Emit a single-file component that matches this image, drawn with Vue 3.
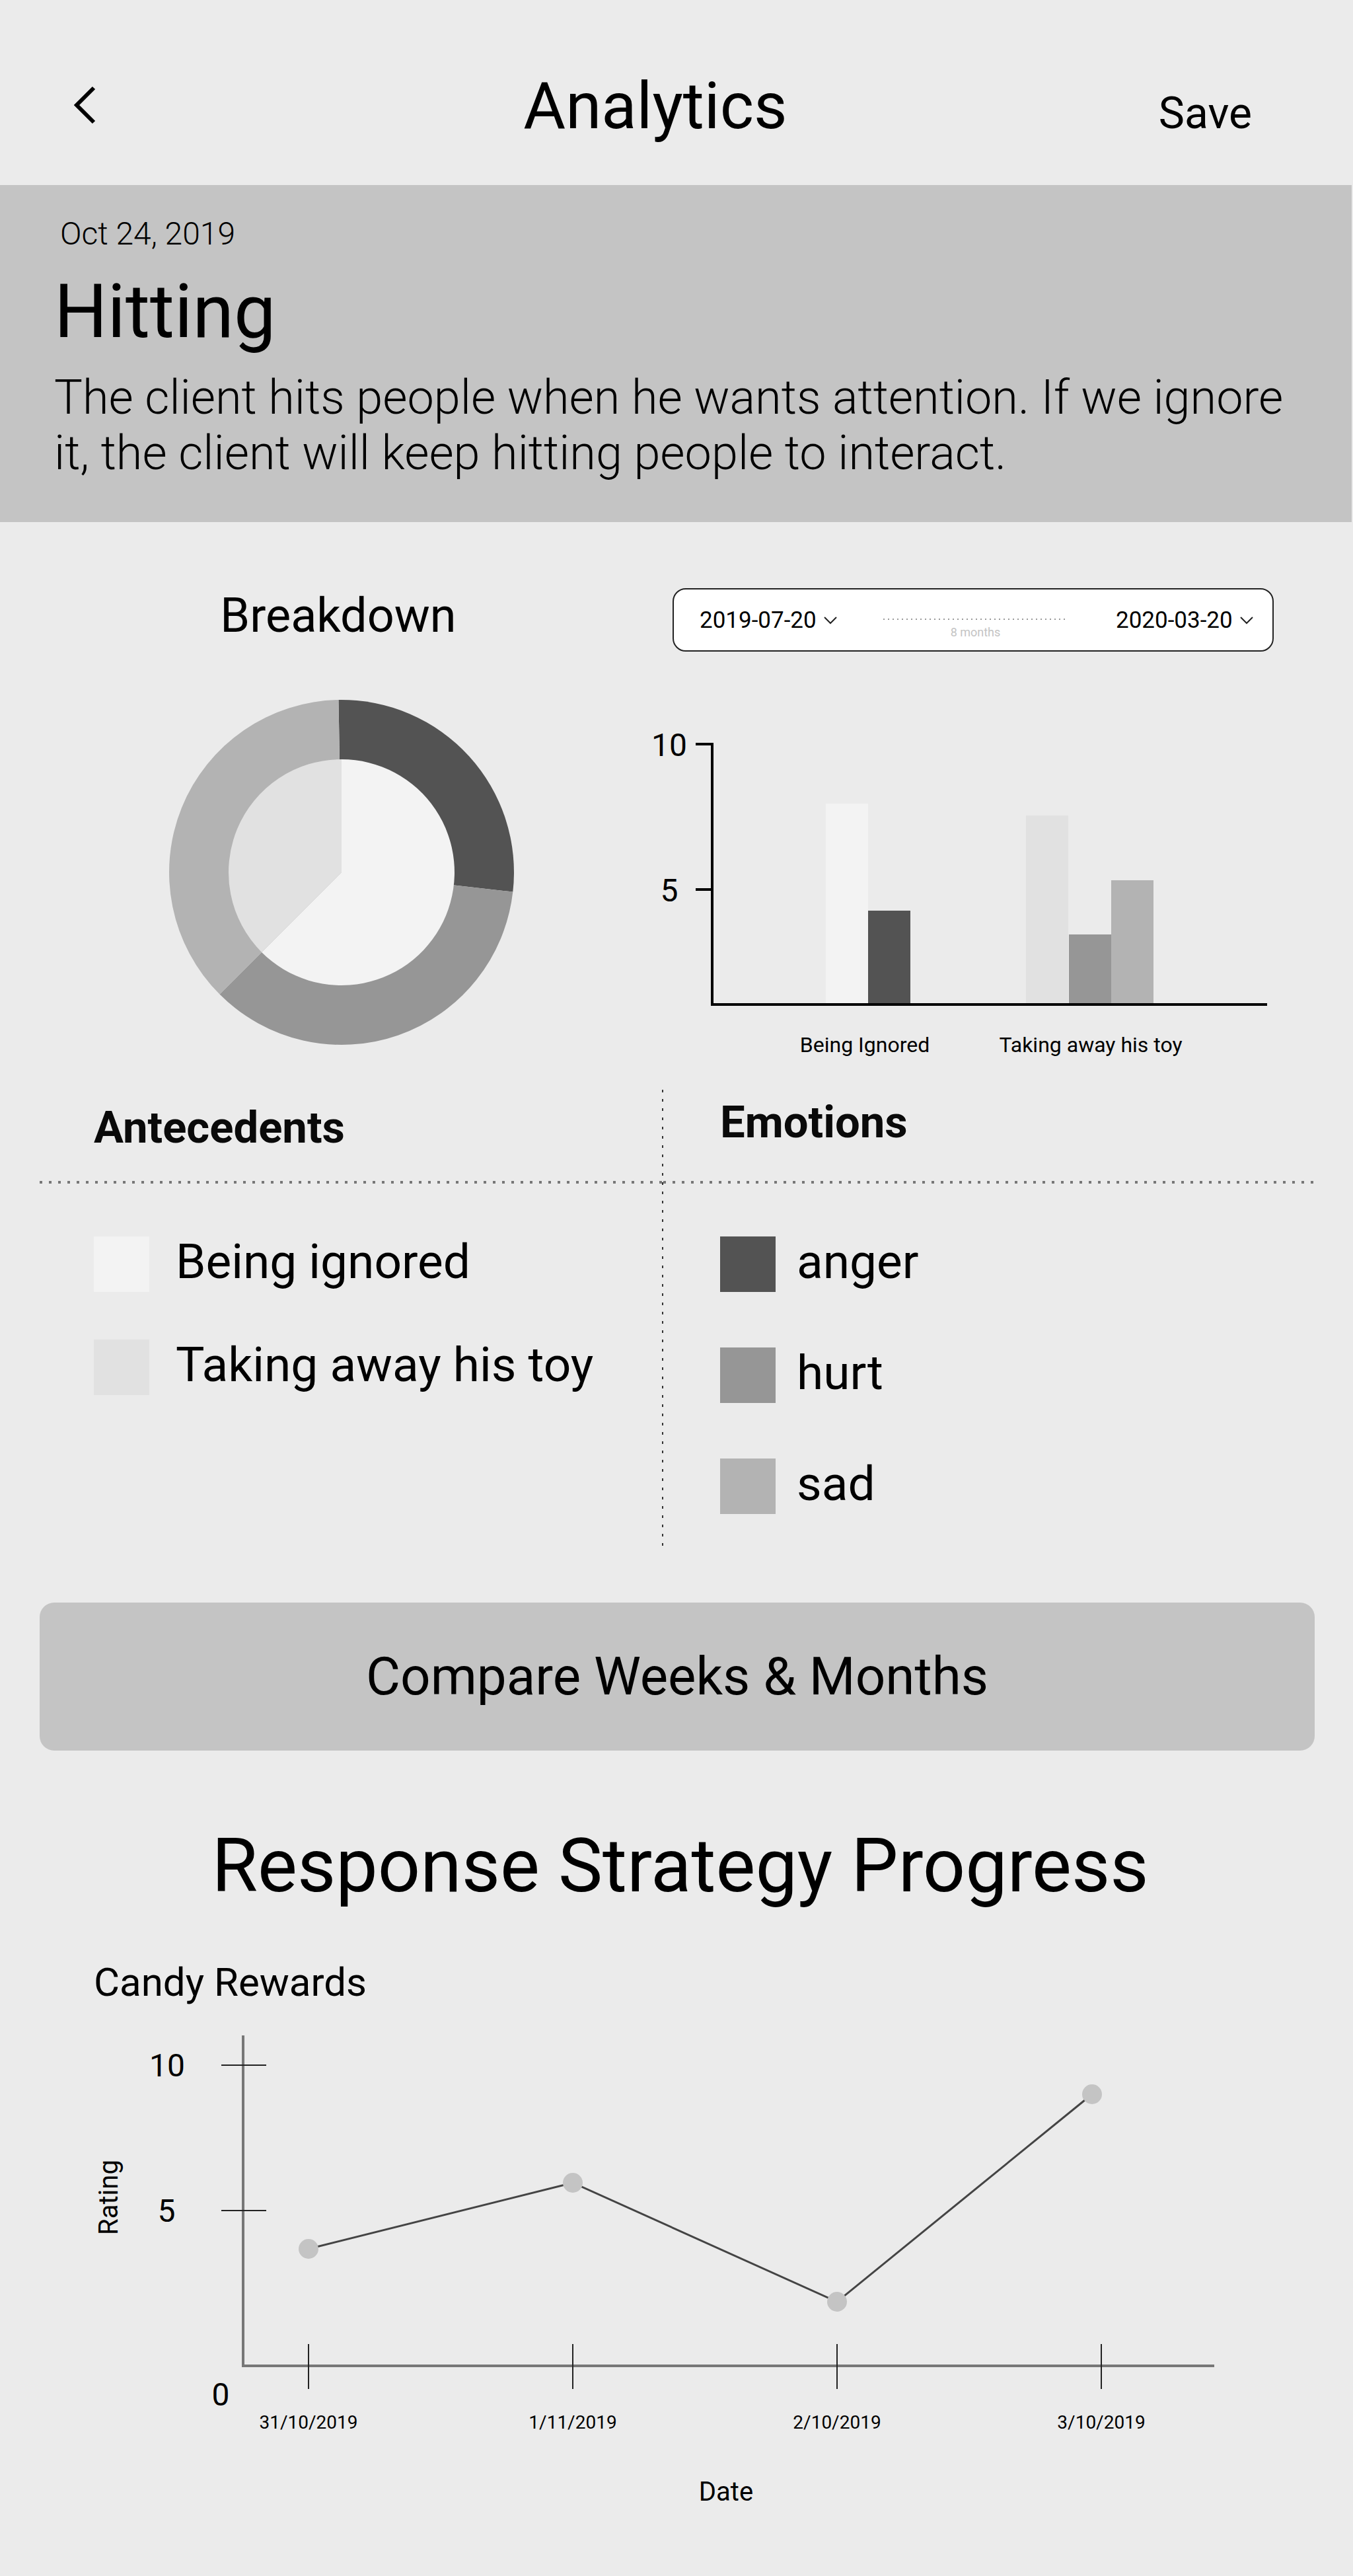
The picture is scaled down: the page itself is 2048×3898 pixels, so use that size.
<script setup>
import { ref } from 'vue'

const startDate = ref('2019-07-20')
const endDate = ref('2020-03-20')

const antecedents = [
  { label: 'Being ignored', color: '#f3f3f3' },
  { label: 'Taking away his toy', color: '#e1e1e1' },
]
const emotions = [
  { label: 'anger', color: '#535353' },
  { label: 'hurt', color: '#969696' },
  { label: 'sad', color: '#b3b3b3' },
]

const bars = [
  { x: 270, height: 304, color: '#f3f3f3' },
  { x: 334, height: 142, color: '#535353' },
  { x: 573, height: 286, color: '#e1e1e1' },
  { x: 638, height: 106, color: '#969696' },
  { x: 702, height: 188, color: '#b3b3b3' },
]

// Angles in degrees, clockwise from twelve o'clock
function wedge(from, to, r) {
  const point = (deg) => {
    const a = (deg * Math.PI) / 180
    return `${(271 + r * Math.sin(a)).toFixed(2)} ${(262 - r * Math.cos(a)).toFixed(2)}`
  }
  return `M271 262L${point(from)}A${r} ${r} 0 ${to - from > 180 ? 1 : 0} 1 ${point(to)}Z`
}
const wedges = [
  { d: wedge(-1, 96.5, 261), color: '#535353' },
  { d: wedge(96.5, 225, 261), color: '#969696' },
  { d: wedge(225, 359, 261), color: '#b3b3b3' },
  { d: wedge(0, 225, 171), color: '#f3f3f3' },
  { d: wedge(225, 360, 171), color: '#e1e1e1' },
]

const ratings = [
  { x: 467, y: 368 },
  { x: 867, y: 268 },
  { x: 1267, y: 448 },
  { x: 1653, y: 134 },
]
const dates = [
  { x: 467, label: '31/10/2019' },
  { x: 867, label: '1/11/2019' },
  { x: 1267, label: '2/10/2019' },
  { x: 1667, label: '3/10/2019' },
]
const ratingLine = ratings.map((p) => `${p.x},${p.y}`).join(' ')
</script>

<template>
  <main class="page">
    <header class="topbar">
      <button class="back" type="button" aria-label="Back">
        <svg width="52" height="68" viewBox="0 0 52 68" fill="none" stroke="#000" stroke-width="6">
          <path d="M40 6L14 32L40 58" />
        </svg>
      </button>
      <h1>Analytics</h1>
      <button class="save" type="button">Save</button>
    </header>

    <section class="summary">
      <p class="date">Oct 24, 2019</p>
      <h2>Hitting</h2>
      <p class="description">
        The client hits people when he wants attention. If we ignore it, the client will keep hitting people to interact.
      </p>
    </section>

    <section class="overview">
      <div class="breakdown">
        <h3>Breakdown</h3>
        <svg class="donut" viewBox="0 0 532 524" role="img" aria-label="Breakdown chart">
          <path v-for="w in wedges" :key="w.d" :d="w.d" :fill="w.color" />
        </svg>
      </div>

      <div class="history">
        <div class="range">
          <label class="picker">
            <select v-model="startDate" aria-label="Start date">
              <option>2019-07-20</option>
            </select>
            <svg width="22" height="16" viewBox="0 0 22 16" fill="none" stroke="#222" stroke-width="2">
              <path d="M2 3L11 12L20 3" />
            </svg>
          </label>
          <div class="span">
            <i class="dots"></i>
            <span>8 months</span>
          </div>
          <label class="picker">
            <select v-model="endDate" aria-label="End date">
              <option>2020-03-20</option>
            </select>
            <svg width="22" height="16" viewBox="0 0 22 16" fill="none" stroke="#222" stroke-width="2">
              <path d="M2 3L11 12L20 3" />
            </svg>
          </label>
        </div>

        <svg class="bars" viewBox="0 0 948 510" role="img" aria-label="Emotions by antecedent">
          <rect v-for="b in bars" :key="b.x" :x="b.x" :y="420 - b.height" width="64" :height="b.height" :fill="b.color" />
          <path d="M73 26H98V420H938M73 246H98" fill="none" stroke="#000" stroke-width="4" />
          <g font-size="48" text-anchor="middle">
            <text x="33" y="44">10</text>
            <text x="33" y="264">5</text>
          </g>
          <g font-size="32" text-anchor="middle">
            <text x="329" y="492">Being Ignored</text>
            <text x="671" y="492">Taking away his toy</text>
          </g>
        </svg>
      </div>
    </section>

    <section class="legend">
      <div class="column antecedents">
        <h3>Antecedents</h3>
        <ul>
          <li v-for="item in antecedents" :key="item.label">
            <i class="swatch" :style="{ background: item.color }"></i>{{ item.label }}
          </li>
        </ul>
      </div>
      <div class="column emotions">
        <h3>Emotions</h3>
        <ul>
          <li v-for="item in emotions" :key="item.label">
            <i class="swatch" :style="{ background: item.color }"></i>{{ item.label }}
          </li>
        </ul>
      </div>
    </section>

    <button class="compare" type="button">Compare Weeks &amp; Months</button>

    <section class="progress">
      <h2>Response Strategy Progress</h2>
      <h3>Candy Rewards</h3>
      <svg viewBox="0 0 2048 861" role="img" aria-label="Candy Rewards rating by date">
        <path d="M368 45V545H1838" fill="none" stroke="#777" stroke-width="4" />
        <g stroke="#222" stroke-width="2">
          <path d="M335 90H403M335 310H403" />
          <path v-for="d in dates" :key="d.x" :d="`M${d.x} 512V580`" />
        </g>
        <polyline :points="ratingLine" fill="none" stroke="#444" stroke-width="3" />
        <circle v-for="p in ratings" :key="p.x" :cx="p.x" :cy="p.y" r="15" fill="#c4c4c4" />
        <g font-size="48" text-anchor="middle">
          <text x="253" y="107">10</text>
          <text x="252" y="327">5</text>
          <text x="334" y="605">0</text>
        </g>
        <g font-size="28" text-anchor="middle">
          <text v-for="d in dates" :key="d.x" :x="d.x" y="640">{{ d.label }}</text>
        </g>
        <g font-size="40" text-anchor="middle">
          <text x="1099" y="749">Date</text>
          <text transform="translate(178 290) rotate(-90)">Rating</text>
        </g>
      </svg>
    </section>
  </main>
</template>

<style>
body {
  margin: 0;
  background: #ebebeb;
}
</style>

<style scoped>
.page {
  background: #ebebeb;
  color: #000;
  font-family: Roboto, sans-serif;
}
h1,
h2,
h3,
p,
ul {
  margin: 0;
  padding: 0;
  font-weight: 400;
}
button,
select {
  margin: 0;
  padding: 0;
  border: 0;
  background: none;
  color: inherit;
  font-family: inherit;
  cursor: pointer;
}
svg {
  display: block;
}
.topbar {
  display: flex;
  justify-content: space-between;
  align-items: baseline;
  padding: 104px 153px 62px 102px;
}
.topbar h1 {
  font-size: 98px;
  line-height: 114px;
}
.back {
  align-self: center;
  width: 128px;
}
.save {
  font-size: 66px;
  line-height: 78px;
}
.summary {
  margin-right: 2px;
  padding: 46px 80px 62px 82px;
  background: #c4c4c4;
}
.date {
  padding-left: 9px;
  font-size: 48px;
  font-weight: 300;
  line-height: 56px;
}
.summary h2 {
  margin-top: 24px;
  font-size: 113px;
  line-height: 132px;
}
.description {
  margin-top: 22px;
  font-size: 72px;
  font-weight: 300;
  line-height: 84px;
}
.overview {
  display: grid;
  grid-template-columns: 980fr 1068fr;
  padding-top: 100px;
}
.breakdown {
  display: flex;
  flex-direction: column;
  align-items: center;
  gap: 84px;
  padding-left: 44px;
}
.breakdown h3 {
  font-size: 72px;
  line-height: 84px;
}
.donut {
  width: 532px;
}
.history {
  padding-right: 120px;
}
.range {
  display: flex;
  justify-content: space-between;
  align-items: center;
  box-sizing: border-box;
  height: 96px;
  margin-left: 38px;
  padding: 2px 28px 0 39px;
  border: 2px solid #222;
  border-radius: 20px;
  background: #fff;
}
.picker {
  display: flex;
  align-items: center;
  gap: 10px;
}
.picker select {
  appearance: none;
  font-size: 35px;
  line-height: 42px;
}
.span {
  display: flex;
  flex-direction: column;
  align-items: center;
  gap: 8px;
  padding-top: 26px;
  padding-right: 4px;
  color: #c4c4c4;
  font-size: 18px;
  line-height: 22px;
}
.dots {
  width: 280px;
  height: 2px;
  background: repeating-linear-gradient(to right, #999 0 2px, transparent 2px 7px);
}
.bars {
  width: 100%;
  margin-top: 114px;
}
.legend {
  display: grid;
  grid-template-columns: 944fr 988fr;
  margin: 39px 58px 0;
}
.column h3 {
  font-size: 67px;
  font-weight: 700;
  line-height: 80px;
  color: #0a0a0a;
  background: repeating-linear-gradient(to right, transparent 0 2px, #777 2px 6px, transparent 6px 14px) left bottom / 100% 4px no-repeat;
}
.column ul {
  display: flex;
  flex-direction: column;
  padding-top: 80px;
  padding-bottom: 53px;
  list-style: none;
}
.column li {
  display: flex;
  font-size: 73px;
  line-height: 76px;
}
.swatch {
  width: 84px;
  height: 84px;
}
.antecedents h3 {
  padding: 17px 0 45px 84px;
}
.antecedents ul {
  gap: 72px;
  padding-left: 84px;
}
.antecedents li {
  gap: 40px;
}
.emotions {
  background: repeating-linear-gradient(to bottom, #333 0 4px, transparent 4px 14px) left top / 2px 100% no-repeat;
}
.emotions h3 {
  padding: 9px 0 53px 88px;
}
.emotions ul {
  gap: 84px;
  padding-left: 88px;
}
.emotions li {
  gap: 32px;
}
.compare {
  display: block;
  width: calc(100% - 118px);
  margin: 81px 58px 0 60px;
  padding: 64px 0;
  border-radius: 22px;
  background: #c4c4c4;
  font-size: 80px;
  line-height: 96px;
}
.progress {
  padding-top: 109px;
}
.progress h2 {
  padding-left: 11px;
  font-size: 113px;
  line-height: 132px;
  text-align: center;
}
.progress h3 {
  margin-top: 75px;
  padding-left: 142px;
  font-size: 60px;
  line-height: 70px;
}
.progress svg {
  width: 100%;
}
</style>
